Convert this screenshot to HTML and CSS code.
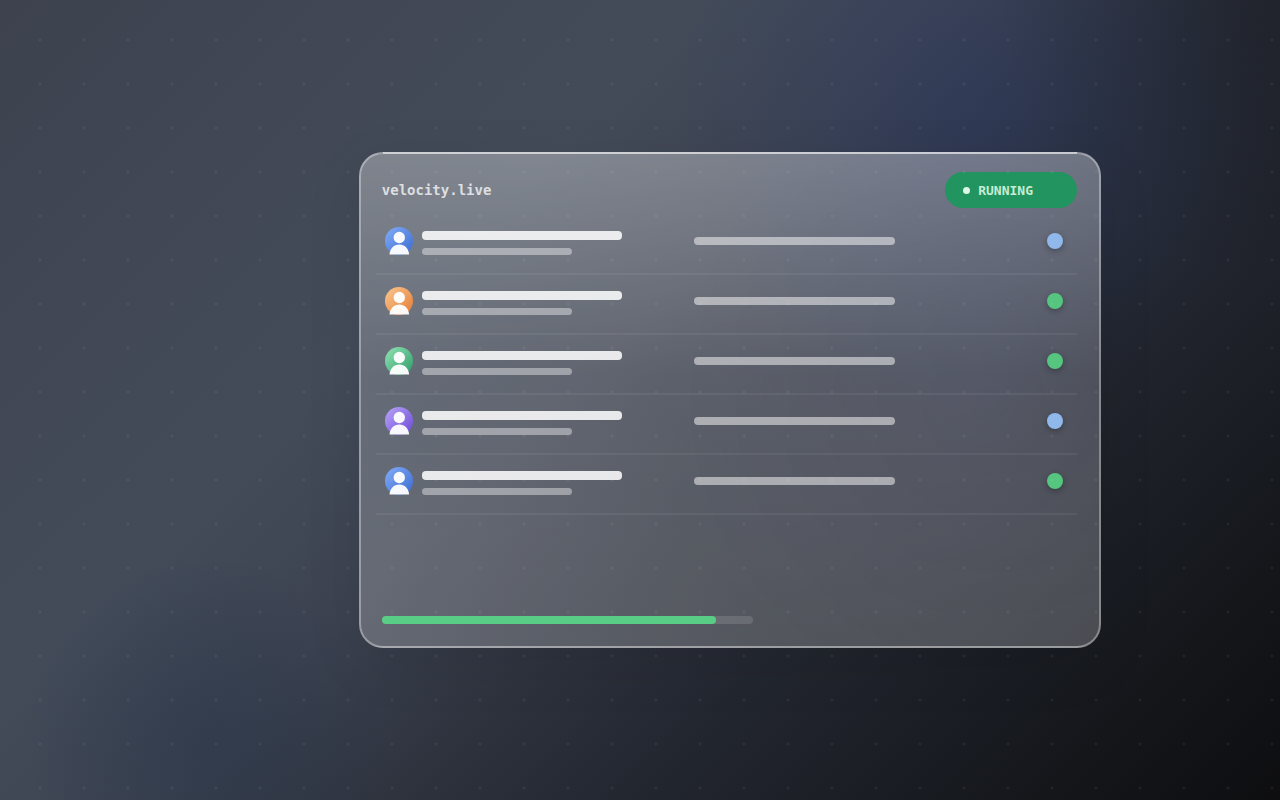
FILE: index.html
```html
<!DOCTYPE html>
<html lang="en">
<head>
  <meta charset="UTF-8">
  <meta name="viewport" content="width=device-width, initial-scale=1">
  <title>velocity.live</title>
  <link rel="stylesheet" href="styles.css">
</head>
<body>

  <svg width="0" height="0" class="sprite" aria-hidden="true">
    <symbol id="person" viewBox="0 0 28 28">
      <circle cx="14.3" cy="10.5" r="5.700"/>
      <path d="M4.500 27.500c.3-5.900 4.500-10 9.800-10s9.500 4.100 9.800 10z"/>
    </symbol>
  </svg>

  <main class="card">
    <header class="card-header">
      <h1>velocity.live</h1>
      <div class="status"><span class="status-dot"></span>RUNNING</div>
    </header>

    <ul class="rows">
      <li class="row">
        <div class="who">
          <svg class="avatar blue"><use href="#person"/></svg>
          <div class="lines"><div class="line name"></div><div class="line sub"></div></div>
        </div>
        <div class="info"><div class="line detail"></div><span class="dot info-dot"></span></div>
      </li>
      <li class="row">
        <div class="who">
          <svg class="avatar orange"><use href="#person"/></svg>
          <div class="lines"><div class="line name"></div><div class="line sub"></div></div>
        </div>
        <div class="info"><div class="line detail"></div><span class="dot ok-dot"></span></div>
      </li>
      <li class="row">
        <div class="who">
          <svg class="avatar green"><use href="#person"/></svg>
          <div class="lines"><div class="line name"></div><div class="line sub"></div></div>
        </div>
        <div class="info"><div class="line detail"></div><span class="dot ok-dot"></span></div>
      </li>
      <li class="row">
        <div class="who">
          <svg class="avatar purple"><use href="#person"/></svg>
          <div class="lines"><div class="line name"></div><div class="line sub"></div></div>
        </div>
        <div class="info"><div class="line detail"></div><span class="dot info-dot"></span></div>
      </li>
      <li class="row">
        <div class="who">
          <svg class="avatar blue"><use href="#person"/></svg>
          <div class="lines"><div class="line name"></div><div class="line sub"></div></div>
        </div>
        <div class="info"><div class="line detail"></div><span class="dot ok-dot"></span></div>
      </li>
    </ul>

    <div class="progress" role="progressbar" aria-label="Progress" aria-valuenow="90" aria-valuemin="0" aria-valuemax="100">
      <div class="progress-fill" style="width: 90%"></div>
    </div>
  </main>

</body>
</html>
```

FILE: styles.css
```css
* {
  box-sizing: border-box;
}
body {
  margin: 0;
  min-height: 100vh;
  padding-left: 180px;
  display: flex;
  align-items: center;
  justify-content: center;
  font-family: "DejaVu Sans Mono", monospace;
  background:
    radial-gradient(circle at 76% 14%, rgba(38, 58, 120, 0.3), transparent 300px),
    radial-gradient(circle at 16% 92%, rgba(25, 45, 70, 0.3), transparent 180px),
    radial-gradient(circle at 100% 0%, rgba(20, 22, 28, 0.45), transparent 280px),
    linear-gradient(135deg, #3d424e 0%, #414755 18%, #434b59 34%, #3c4250 46%, #2d323d 58%, #22262f 69%, #1a1d24 80%, #131518 90%, #0e0e11 100%);
}
/* dot grid laid over the whole page */
body::after {
  content: "";
  position: absolute;
  inset: 0;
  pointer-events: none;
  background: radial-gradient(circle, rgba(255, 255, 255, 0.055) 1px, transparent 2px) 18px 18px / 44px 44px;
}
.sprite {
  position: absolute;
}
.card {
  width: 58vw;
  min-height: 62vh;
  padding: 18px 22px 22px 15px;
  display: flex;
  flex-direction: column;
  position: relative;
  border: 2px solid rgba(255, 255, 255, 0.34);
  border-radius: 24px;
  background:
    radial-gradient(circle at 85% 50%, rgba(125, 130, 175, 0.14), transparent 320px),
    linear-gradient(180deg, rgba(255, 255, 255, 0.33) 0%, rgba(255, 255, 255, 0.19) 45%, rgba(255, 255, 255, 0.22) 100%);
  box-shadow: 0 16px 60px rgba(0, 0, 0, 0.08);
}
/* bright top edge */
.card::before {
  content: "";
  position: absolute;
  top: -2px;
  left: 22px;
  right: 22px;
  height: 2px;
  background: rgba(255, 255, 255, 0.5);
}
.card-header {
  display: flex;
  align-items: center;
  justify-content: space-between;
  padding-left: 6px;
}
h1 {
  margin: 0;
  font-size: 14px;
  line-height: 20px;
  color: rgba(255, 255, 255, 0.75);
}
.status {
  width: 132px;
  height: 36px;
  padding-left: 18px;
  display: flex;
  align-items: center;
  gap: 8px;
  border-radius: 18px;
  background: #22945f;
  color: #c5edd4;
  font-size: 13px;
  font-weight: bold;
}
.status-dot {
  width: 7px;
  height: 7px;
  border-radius: 50%;
  background: #dcf7e6;
}
.rows {
  list-style: none;
  margin: 7px 0 0;
  padding: 0;
}
.row {
  height: 60px;
  padding: 12px 14px 0 9px;
  display: grid;
  grid-template-columns: 5fr 6fr;
  align-items: start;
  border-bottom: 2px solid rgba(255, 255, 255, 0.06);
}
.who,
.info {
  height: 28px;
  display: flex;
  align-items: center;
}
.who {
  gap: 9px;
}
.info {
  justify-content: space-between;
}
.avatar {
  width: 28px;
  height: 28px;
  border-radius: 50%;
  overflow: visible;
  fill: rgba(255, 255, 255, 0.95);
}
.blue {
  background: linear-gradient(135deg, #83adf8, #3a6bd0);
}
.orange {
  background: linear-gradient(135deg, #fcc890, #e27a34);
}
.green {
  background: linear-gradient(135deg, #92e4b4, #2f9a68);
}
.purple {
  background: linear-gradient(135deg, #bba6f8, #6a48d6);
}
.lines {
  display: flex;
  flex-direction: column;
  gap: 8px;
  padding-top: 4px;
}
.line {
  border-radius: 4px;
}
.name {
  width: 200px;
  height: 9px;
  background: rgba(255, 255, 255, 0.86);
}
.sub {
  width: 150px;
  height: 7px;
  background: rgba(255, 255, 255, 0.4);
}
.detail {
  width: 201px;
  height: 8px;
  margin-left: 1px;
  background: rgba(255, 255, 255, 0.5);
}
.dot {
  width: 16px;
  height: 16px;
  border-radius: 50%;
  box-shadow: 0 2px 6px rgba(0, 0, 0, 0.3);
}
.info-dot {
  background: #90b8ea;
}
.ok-dot {
  background: #55c57f;
}
.progress {
  width: 371px;
  height: 8px;
  margin: auto 0 0 6px;
  border-radius: 4px;
  background: rgba(255, 255, 255, 0.13);
}
.progress-fill {
  height: 100%;
  border-radius: 4px;
  background: #59cc85;
}
```
